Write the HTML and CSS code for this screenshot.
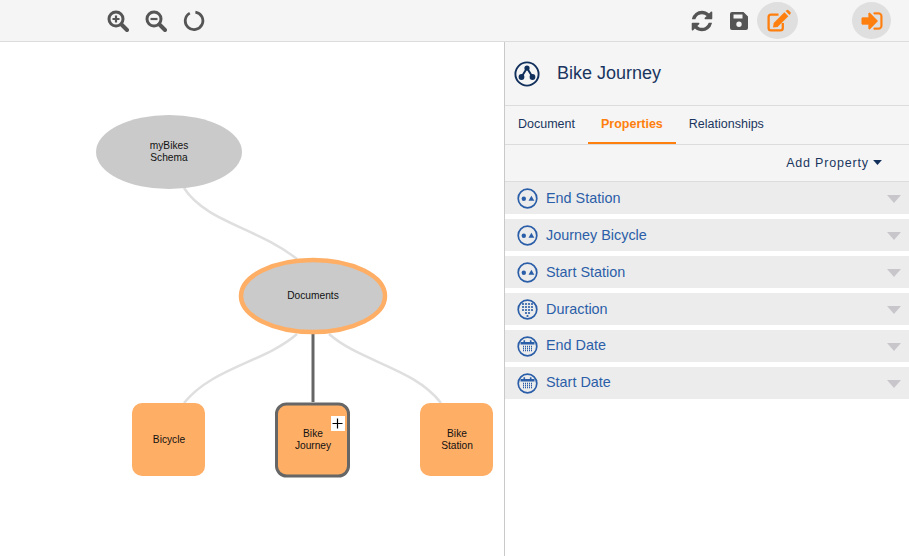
FILE: index.html
```html
<!DOCTYPE html>
<html>
<head>
    <title>Bike Journey - Schema</title>
    <link rel="stylesheet" href="styles.css">
</head>
<body>

<svg class="defs" width="0" height="0">
    <symbol id="ico-object" viewBox="0 0 21 21">
        <circle cx="10.5" cy="10.5" r="9.3" fill="none" stroke="currentColor" stroke-width="1.7"/>
        <circle cx="6.8" cy="10.7" r="2.2" fill="currentColor"/>
        <path d="M14.4 7.8l2.9 5h-5.8z" fill="currentColor"/>
    </symbol>
    <symbol id="ico-number" viewBox="0 0 21 21">
        <circle cx="10.5" cy="10.5" r="9.3" fill="none" stroke="currentColor" stroke-width="1.7"/>
        <g fill="currentColor">
            <circle cx="6" cy="5" r="1.1"/><circle cx="9" cy="5" r="1.1"/><circle cx="12" cy="5" r="1.1"/><circle cx="15" cy="5" r="1.1"/>
            <circle cx="6" cy="8" r="1.1"/><circle cx="9" cy="8" r="1.1"/><circle cx="12" cy="8" r="1.1"/><circle cx="15" cy="8" r="1.1"/>
            <circle cx="6" cy="11" r="1.1"/><circle cx="9" cy="11" r="1.1"/><circle cx="12" cy="11" r="1.1"/><circle cx="15" cy="11" r="1.1"/>
            <circle cx="9" cy="14" r="1.1"/><circle cx="12" cy="14" r="1.1"/><circle cx="10.5" cy="17" r="1.1"/>
        </g>
    </symbol>
    <symbol id="ico-date" viewBox="0 0 21 21">
        <circle cx="10.5" cy="10.5" r="9.3" fill="none" stroke="currentColor" stroke-width="1.7"/>
        <path d="M3.5 6h3V4.2h1.6V6h4.8V4.2h1.6V6h3v2.6h-14z" fill="currentColor"/>
        <path d="M6 10.5h9M6 12.5h9M6 14.5h9" stroke="currentColor" stroke-width="1.3" stroke-dasharray="1 1" fill="none"/>
    </symbol>
    <symbol id="ico-caret" viewBox="0 0 14 8">
        <path d="M0 0h14L7 8z" fill="currentColor"/>
    </symbol>
</svg>

<header class="toolbar">
    <div class="tool-group tool-group-left">
        <button class="tool" title="Zoom in">
            <svg width="22" height="22" viewBox="0 0 22 22" fill="none" stroke="#555" stroke-width="3">
                <circle cx="9" cy="9" r="7"/>
                <path d="M14.5 14.5l5.5 5.5" stroke-width="4" stroke-linecap="round"/>
                <path d="M5.5 9h7M9 5.5v7" stroke-width="2.2"/>
            </svg>
        </button>
        <button class="tool" title="Zoom out">
            <svg width="22" height="22" viewBox="0 0 22 22" fill="none" stroke="#555" stroke-width="3">
                <circle cx="9" cy="9" r="7"/>
                <path d="M14.5 14.5l5.5 5.5" stroke-width="4" stroke-linecap="round"/>
                <path d="M5.5 9h7" stroke-width="2.2"/>
            </svg>
        </button>
        <button class="tool" title="Reset">
            <svg width="22" height="22" viewBox="0 0 22 22" fill="none" stroke="#555" stroke-width="2.8">
                <path d="M12.4 2.1A8.8 8.8 0 1 1 6.8 3.1"/>
            </svg>
        </button>
    </div>
    <div class="tool-group tool-group-right">
        <button class="tool" title="Refresh">
            <svg width="24" height="24" viewBox="0 0 1792 1792" fill="#555">
                <path d="M1639 1056q0 5-1 7-64 268-268 434.5t-478 166.5q-146 0-282.5-55t-243.5-157l-129 129q-19 19-45 19t-45-19-19-45v-448q0-26 19-45t45-19h448q26 0 45 19t19 45-19 45l-137 137q71 66 161 102t187 36q134 0 250-65t186-179q11-17 53-117 8-23 30-23h192q13 0 22.5 9.5t9.5 22.5zm25-800v448q0 26-19 45t-45 19h-448q-26 0-45-19t-19-45 19-45l138-138q-148-137-349-137-134 0-250 65t-186 179q-11 17-53 117-8 23-30 23h-199q-13 0-22.5-9.5t-9.5-22.5v-7q65-268 270-434.5t480-166.5q146 0 284 55.5t245 156.5l130-129q19-19 45-19t45 19 19 45z"/>
            </svg>
        </button>
        <button class="tool" title="Save">
            <svg width="18" height="18" viewBox="0 0 18 18">
                <path fill="#555" fill-rule="evenodd" d="M2 0h11.5L18 4.5V16a2 2 0 0 1-2 2H2a2 2 0 0 1-2-2V2a2 2 0 0 1 2-2zM3.5 2.5v4h9v-4zM9 9.6a2.7 2.7 0 1 0 0 5.4 2.7 2.7 0 0 0 0-5.4z"/>
            </svg>
        </button>
        <button class="tool tool-round tool-edit" title="Edit">
            <svg width="26" height="26" viewBox="0 0 26 26" fill="#ff7f0e">
                <path d="M13.5 6.7H6a2.4 2.4 0 0 0-2.4 2.4V20A2.4 2.4 0 0 0 6 22.4h9.4a2.4 2.4 0 0 0 2.4-2.4v-5" fill="none" stroke="#ff7f0e" stroke-width="2.3"/>
                <path d="M8 19.6l.7-4.6L19.4 4.3l3.9 3.9L12.6 18.9z"/>
                <path d="M20.6 3.1l.9-.9a1.4 1.4 0 0 1 2 0l1.8 1.8a1.4 1.4 0 0 1 0 2l-.9.9z"/>
            </svg>
        </button>
        <button class="tool tool-round tool-login" title="Log in">
            <svg width="24" height="24" viewBox="0 0 1792 1792" fill="#ff7f0e" stroke="#ff7f0e" stroke-width="30">
                <path d="M1312 896q0 26-19 45l-544 544q-19 19-45 19t-45-19-19-45v-288h-448q-26 0-45-19t-19-45v-384q0-26 19-45t45-19h448v-288q0-26 19-45t45-19 45 19l544 544q19 19 19 45zm352-352v704q0 119-84.5 203.5t-203.5 84.5h-320q-13 0-22.5-9.5t-9.5-22.5q0-4-1-20t-.5-26.5 3-23.5 10-19.5 20.5-6.5h320q66 0 113-47t47-113v-704q0-66-47-113t-113-47h-312l-11.5-1-11.5-3-8-5.5-7-9-2-13.5q0-4-1-20t-.5-26.5 3-23.5 10-19.5 20.5-6.5h320q119 0 203.5 84.5t84.5 203.5z"/>
            </svg>
        </button>
    </div>
</header>

<main class="layout">
    <section class="canvas">
        <svg class="graph" width="504" height="514" viewBox="0 42 504 514">
            <g class="edges">
                <path d="M184 188C206 222 258 228 297 259"/>
                <path d="M297 334C265 362 212 368 184 403"/>
                <path d="M329 334C361 362 414 368 441 403"/>
            </g>
            <path class="edge-active" d="M313 334V402"/>

            <ellipse class="node-schema" cx="169" cy="152" rx="73" ry="37"/>
            <text class="node-label" x="169" y="149">myBikes</text>
            <text class="node-label" x="169" y="161">Schema</text>

            <ellipse class="node-schema node-docs" cx="313" cy="296" rx="72" ry="36"/>
            <text class="node-label" x="313" y="299">Documents</text>

            <rect class="node-doc" x="132" y="403" width="73" height="73" rx="10"/>
            <text class="node-label" x="169" y="443">Bicycle</text>

            <rect class="node-doc node-selected" x="276.5" y="404" width="72" height="72" rx="10"/>
            <text class="node-label" x="313" y="437">Bike</text>
            <text class="node-label" x="313" y="449">Journey</text>
            <rect class="node-add" x="331" y="416" width="14" height="15"/>
            <path class="node-plus" d="M332.5 423.5h10M337.5 418.5v10"/>

            <rect class="node-doc" x="420" y="403" width="73" height="73" rx="10"/>
            <text class="node-label" x="457" y="437">Bike</text>
            <text class="node-label" x="457" y="449">Station</text>
        </svg>
    </section>

    <aside class="panel">
        <div class="panel-head">
            <svg width="26" height="26" viewBox="0 0 26 26" class="panel-logo">
                <circle cx="13" cy="13" r="11.6" fill="none" stroke="#12305c" stroke-width="1.9"/>
                <path d="M13 7l-5.5 9M13 7l5.5 9" stroke="#12305c" stroke-width="2"/>
                <circle cx="13" cy="7" r="2.6" fill="#12305c"/>
                <circle cx="7.5" cy="16" r="2.9" fill="#12305c"/>
                <circle cx="18.5" cy="16" r="2.9" fill="#12305c"/>
            </svg>
            <h2>Bike Journey</h2>
        </div>

        <nav class="tabs">
            <a href="#">Document</a>
            <a href="#" class="active">Properties</a>
            <a href="#">Relationships</a>
        </nav>

        <div class="add-row">
            <a href="#" class="add-prop">Add Property <svg width="9" height="5" class="add-caret"><use href="#ico-caret"/></svg></a>
        </div>

        <ul class="props">
            <li><svg width="21" height="21"><use href="#ico-object"/></svg><span>End Station</span><svg class="caret" width="14" height="8"><use href="#ico-caret"/></svg></li>
            <li><svg width="21" height="21"><use href="#ico-object"/></svg><span>Journey Bicycle</span><svg class="caret" width="14" height="8"><use href="#ico-caret"/></svg></li>
            <li><svg width="21" height="21"><use href="#ico-object"/></svg><span>Start Station</span><svg class="caret" width="14" height="8"><use href="#ico-caret"/></svg></li>
            <li><svg width="21" height="21"><use href="#ico-number"/></svg><span>Duraction</span><svg class="caret" width="14" height="8"><use href="#ico-caret"/></svg></li>
            <li class="date"><svg width="21" height="21"><use href="#ico-date"/></svg><span>End Date</span><svg class="caret" width="14" height="8"><use href="#ico-caret"/></svg></li>
            <li class="date"><svg width="21" height="21"><use href="#ico-date"/></svg><span>Start Date</span><svg class="caret" width="14" height="8"><use href="#ico-caret"/></svg></li>
        </ul>
    </aside>
</main>

</body>
</html>
```

FILE: styles.css
```css
* {
    box-sizing: border-box;
}
body {
    margin: 0;
    width: 909px;
    height: 556px;
    overflow: hidden;
    background-color: white;
    font-family: "Liberation Sans", Arial, sans-serif;
    display: flex;
    flex-direction: column;
}
.defs {
    position: absolute;
}
.toolbar {
    height: 42px;
    flex: none;
    background-color: #f5f5f5;
    border-bottom: 1px solid #dcdcdc;
    display: flex;
    justify-content: space-between;
    padding-top: 2px;
}
.tool-group {
    display: flex;
    align-items: flex-start;
}
.tool-group-left {
    padding-left: 107px;
    gap: 16px;
}
.tool-group-right {
    padding-right: 18px;
}
.tool {
    border: none;
    background: none;
    padding: 0;
    height: 37px;
    display: flex;
    align-items: center;
    justify-content: center;
}
.tool-round {
    background-color: #dfdfdf;
    border-radius: 50%;
}
.tool-edit {
    width: 41px;
    margin-left: 9px;
}
.tool-login {
    width: 39px;
    margin-left: 54px;
}
.tool-group-right .tool:nth-child(2) {
    margin-left: 16px;
}

.layout {
    flex: 1;
    display: flex;
    min-height: 0;
}
.canvas {
    width: 505px;
    flex: none;
    border-right: 1px solid #c9c9c9;
}
.graph {
    display: block;
}
.edges path {
    fill: none;
    stroke: #dfdfdf;
    stroke-width: 2.5;
}
.edge-active {
    fill: none;
    stroke: #666;
    stroke-width: 3;
}
.node-schema {
    fill: #cacaca;
}
.node-docs {
    stroke: #ffae66;
    stroke-width: 4.5;
}
.node-doc {
    fill: #ffae66;
}
.node-selected {
    stroke: #666;
    stroke-width: 3;
}
.node-add {
    fill: white;
}
.node-plus {
    fill: none;
    stroke: black;
    stroke-width: 1.2;
}
.node-label {
    font-size: 10.2px;
    fill: #111;
    text-anchor: middle;
}

.panel {
    flex: 1;
}
.panel-head {
    height: 64px;
    display: flex;
    align-items: center;
    padding-left: 9px;
    background-color: #f5f5f5;
    border-bottom: 1px solid #dcdcdc;
}
.panel-head h2 {
    margin: 0 0 0 17px;
    font-size: 18px;
    font-weight: normal;
    color: #1a3560;
}
.tabs {
    height: 39px;
    display: flex;
    background-color: #f5f5f5;
    border-bottom: 1px solid #dcdcdc;
}
.tabs a {
    padding: 0 13px;
    line-height: 36px;
    height: 38px;
    font-size: 12.5px;
    color: #1a3560;
    text-decoration: none;
}
.tabs a.active {
    color: #ff7f0e;
    font-weight: bold;
    border-bottom: 2px solid #ff7f0e;
}
.add-row {
    height: 37px;
    display: flex;
    justify-content: flex-end;
    padding: 11px 27px 0 0;
    background-color: #f5f5f5;
    border-bottom: 1px solid #dcdcdc;
}
.add-prop {
    font-size: 12.5px;
    letter-spacing: 0.8px;
    color: #1a3560;
    text-decoration: none;
}
.add-caret {
    vertical-align: 2px;
    color: #12305c;
}
.props {
    list-style: none;
    margin: 0;
    padding: 0;
}
.props li {
    height: 32px;
    margin-bottom: 5px;
    background-color: #ececec;
    display: flex;
    align-items: center;
    padding-left: 12px;
    color: #2b5ea8;
    font-size: 14.4px;
}
.props li span {
    margin-left: 8px;
    flex: 1;
}
.props li.date span {
    margin-bottom: 2px;
}
.props .caret {
    color: #c9c6cb;
    margin: 2px 8px 0 0;
}
```
